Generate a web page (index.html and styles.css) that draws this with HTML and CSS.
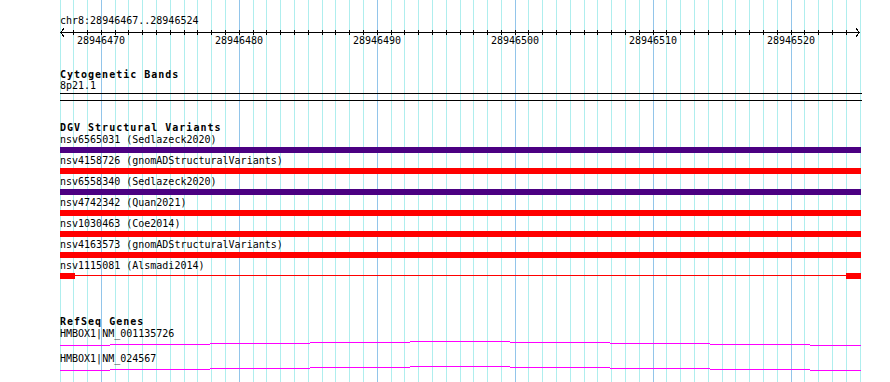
FILE: index.html
```html
<!DOCTYPE html>
<html>
<head>
<meta charset="UTF-8">
<title>chr8:28946467..28946524</title>
<link rel="stylesheet" href="styles.css">
</head>
<body>
<div id="browser">
  <!-- one line per base, filled in by script.js -->
  <svg id="grid" width="890" height="382"></svg>

  <div class="locus">chr8:28946467..28946524</div>
  <svg id="ruler" width="890" height="20">
    <path class="axis" d="M60 5.5 H860 M64 1.5 L60.5 5.5 L64 9.5 M856 1.5 L859.5 5.5 L856 9.5"/>
    <g id="ticks"></g>
    <text x="101" y="17">28946470</text>
    <text x="239" y="17">28946480</text>
    <text x="377" y="17">28946490</text>
    <text x="515" y="17">28946500</text>
    <text x="653" y="17">28946510</text>
    <text x="791" y="17">28946520</text>
  </svg>

  <div class="track cyto">
    <div class="track-title">Cytogenetic Bands</div>
    <div class="label">8p21.1</div>
    <div class="band"></div>
  </div>

  <div class="track dgv">
    <div class="track-title">DGV Structural Variants</div>
    <div class="rows">
      <div class="variant">
        <div class="label">nsv6565031 (Sedlazeck2020)</div>
        <div class="bar indigo"></div>
      </div>
      <div class="variant">
        <div class="label">nsv4158726 (gnomADStructuralVariants)</div>
        <div class="bar red"></div>
      </div>
      <div class="variant">
        <div class="label">nsv6558340 (Sedlazeck2020)</div>
        <div class="bar indigo"></div>
      </div>
      <div class="variant">
        <div class="label">nsv4742342 (Quan2021)</div>
        <div class="bar red"></div>
      </div>
      <div class="variant">
        <div class="label">nsv1030463 (Coe2014)</div>
        <div class="bar red"></div>
      </div>
      <div class="variant">
        <div class="label">nsv4163573 (gnomADStructuralVariants)</div>
        <div class="bar red"></div>
      </div>
      <div class="variant">
        <div class="label">nsv1115081 (Alsmadi2014)</div>
        <div class="bar split">
          <div class="end"></div>
          <div class="stem"></div>
          <div class="end"></div>
        </div>
      </div>
    </div>
  </div>

  <div class="track refseq">
    <div class="track-title">RefSeq Genes</div>
    <div class="rows">
      <div class="gene">
        <div class="label">HMBOX1|NM_001135726</div>
        <svg class="intron" width="802" height="13">
          <path d="M0 5.5H50 M50 4.5H150 M150 3.5H250 M250 2.5H350 M350 1.5H450 M450 2.5H550 M550 3.5H650 M650 4.5H750 M750 5.5H801"/>
        </svg>
      </div>
      <div class="gene">
        <div class="label">HMBOX1|NM_024567</div>
        <svg class="intron" width="802" height="13">
          <path d="M0 5.5H50 M50 4.5H150 M150 3.5H250 M250 2.5H350 M350 1.5H450 M450 2.5H550 M550 3.5H650 M650 4.5H750 M750 5.5H801"/>
        </svg>
      </div>
    </div>
  </div>
</div>
<script src="script.js"></script>
</body>
</html>
```

FILE: styles.css
```css
body {
  margin: 0;
  background: #fff;
}

#browser {
  position: relative;
  z-index: 0;
  width: 890px;
  height: 382px;
  overflow: hidden;
  box-sizing: border-box;
  padding-top: 15px;
  font-family: "DejaVu Sans Mono", "Liberation Mono", monospace;
  font-size: 10px;
  color: #000;
}

#grid {
  position: absolute;
  left: 0;
  top: 0;
  z-index: -1;
  shape-rendering: crispEdges;
}

#grid .minor {
  stroke: #afeeee;
}

#grid .major {
  stroke: #92c5ea;
}

.locus {
  padding-left: 60px;
  line-height: 12px;
}

#ruler {
  display: block;
  shape-rendering: crispEdges;
}

#ruler .axis,
#ruler line {
  stroke: #000;
  fill: none;
}

#ruler text {
  font-family: "DejaVu Sans Mono", "Liberation Mono", monospace;
  font-size: 10px;
  text-anchor: middle;
  fill: #000;
}

.track {
  padding-left: 60px;
}

.track-title {
  font-weight: bold;
  letter-spacing: 1px;
  line-height: 11px;
}

.label {
  line-height: 12px;
  white-space: pre;
}

.cyto {
  margin-top: 22px;
}

.band {
  width: 802px;
  height: 6px;
  margin-top: 1px;
  border-top: 1px solid #000;
  border-bottom: 1px solid #000;
}

.dgv {
  margin-top: 21px;
}

.rows {
  margin-top: 1px;
}

.variant {
  padding-bottom: 2px;
}

.bar {
  width: 801px;
  height: 6px;
  margin-top: 1px;
}

.bar.indigo {
  background: #4b0082;
}

.bar.red {
  background: #ff0000;
}

.bar.split {
  display: flex;
  align-items: flex-start;
}

.bar.split .end {
  width: 15px;
  height: 6px;
  background: #ff0000;
}

.bar.split .stem {
  flex: 1;
  height: 1px;
  margin-top: 2px;
  background: #ff0000;
}

.refseq {
  margin-top: 35px;
}

.intron {
  display: block;
  shape-rendering: crispEdges;
}

.intron path {
  stroke: #ff00ff;
  stroke-width: 1;
  fill: none;
}
```

FILE: script.js
```js
// grid lines and ruler ticks: one per base, 58 bases over 800px
var NS = "http://www.w3.org/2000/svg";
var BASES = 58;
var LEFT = 60;
var SPAN = 800;

function baseX(i) {
  return Math.floor(LEFT + i * SPAN / BASES) + 0.5;
}

function addLine(parent, x, y1, y2, cls) {
  var line = document.createElementNS(NS, "line");
  line.setAttribute("x1", x);
  line.setAttribute("x2", x);
  line.setAttribute("y1", y1);
  line.setAttribute("y2", y2);
  if (cls) line.setAttribute("class", cls);
  parent.appendChild(line);
}

var grid = document.getElementById("grid");
for (var i = 0; i <= BASES; i++) {
  // every 10th base (28946470, 28946480, ...) gets the darker line
  addLine(grid, baseX(i), 0, 382, (i % 10 == 3) ? "major" : "minor");
}

var ticks = document.getElementById("ticks");
for (var j = 1; j < BASES; j++) {
  addLine(ticks, baseX(j), 3, 8);
}
```
